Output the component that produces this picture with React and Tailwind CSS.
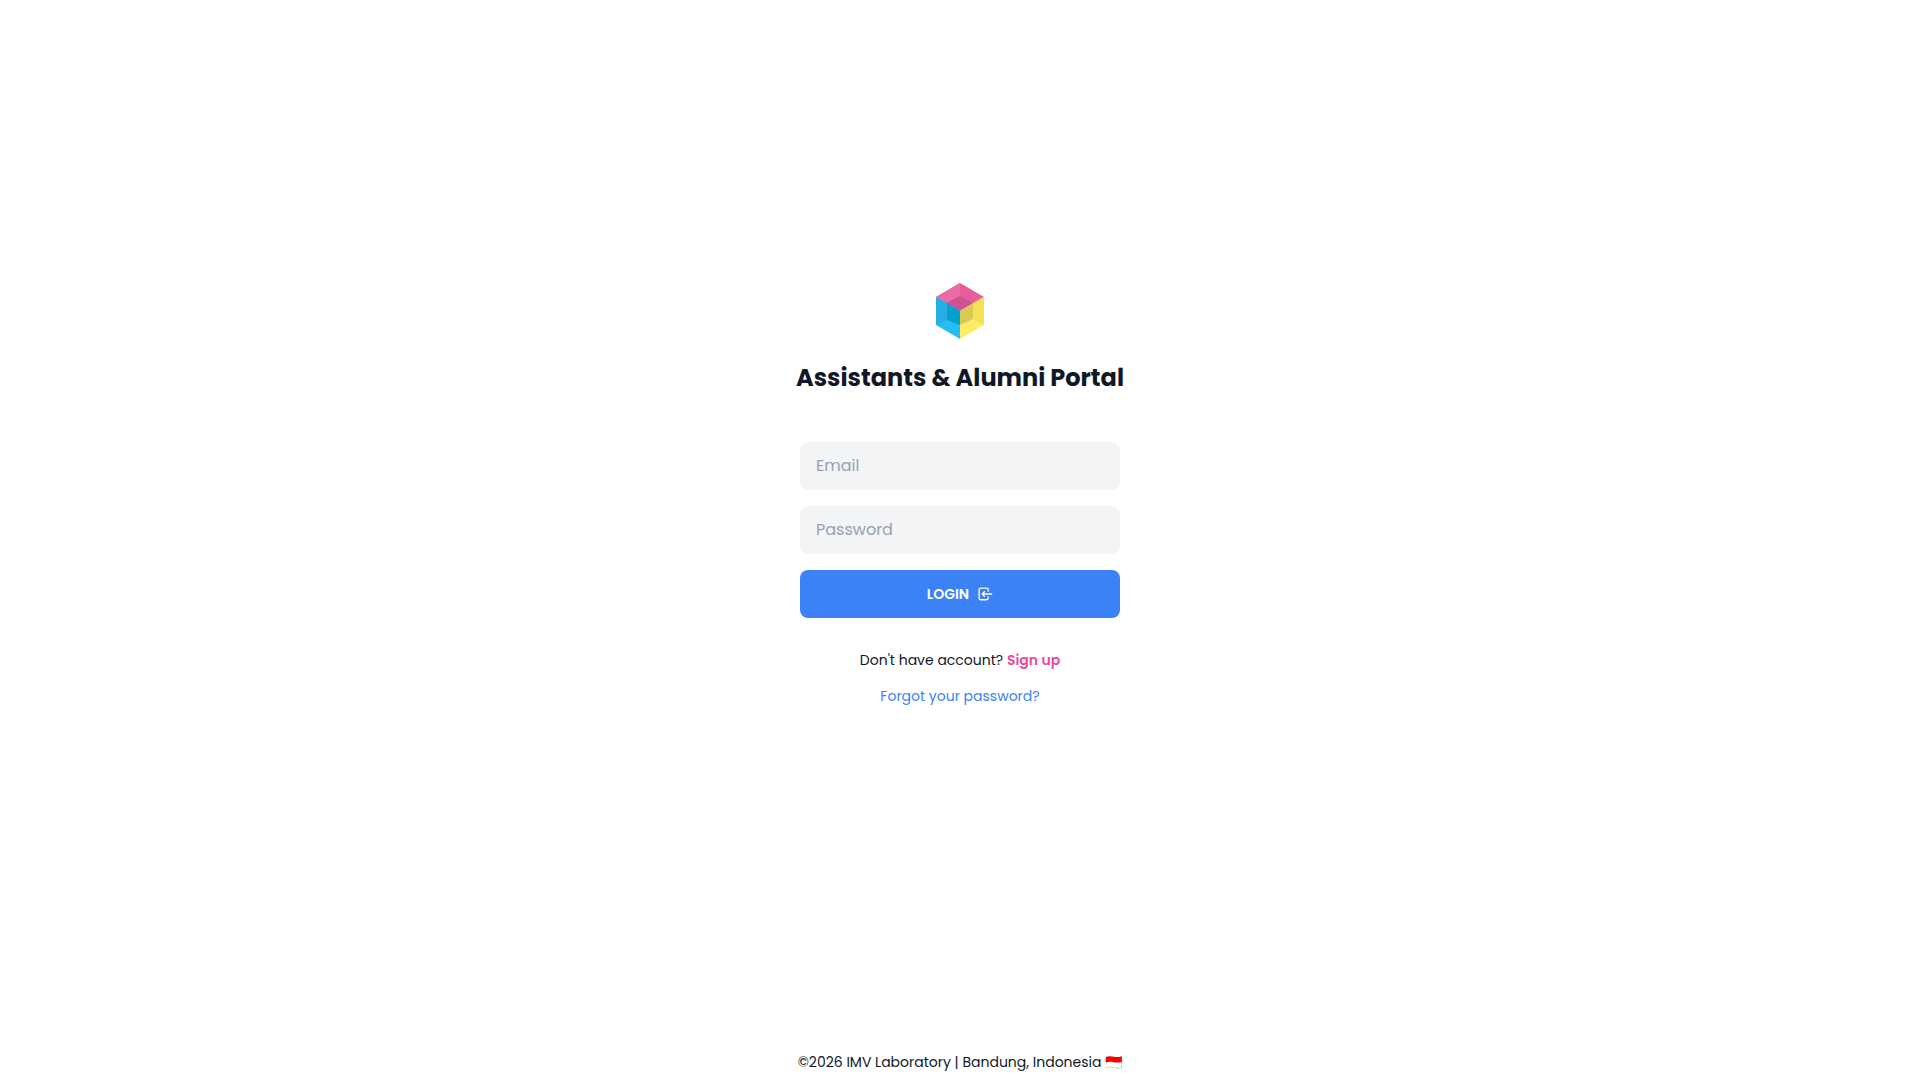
import React, { useState } from 'react';

const Logo = () => (
    <svg viewBox="0 0 48 56" className="w-12 h-14" role="img" aria-label="IMV Laboratory">
        {/* top face */}
        <path d="M24 0 0 14 24 28 48 14Z" fill="#e85c9c" />
        <path d="M24 0 0 14 11 20 24 13Z" fill="#ea6ca6" />
        <path d="M24 13 11 20 24 28 37 20Z" fill="#cc5291" />
        {/* left face */}
        <path d="M0 14 24 28V56L0 42Z" fill="#28bdf0" />
        <path d="M0 14 11 20V37L0 42Z" fill="#27afe4" />
        <path d="M11 20 24 28V42L11 37Z" fill="#05a0cf" />
        {/* right face */}
        <path d="M48 14 24 28V56L48 42Z" fill="#fbed65" />
        <path d="M48 14 37 20V36L48 42Z" fill="#f5e155" />
        <path d="M37 20 24 28V42L37 36Z" fill="#d8ca55" />
    </svg>
);

const LoginIcon = () => (
    <svg
        viewBox="0 0 16 16"
        className="w-4 h-4"
        fill="none"
        stroke="currentColor"
        strokeWidth="1.4"
        strokeLinecap="round"
        strokeLinejoin="round"
        aria-hidden="true"
    >
        <path d="M11.2 5V3.8a1.7 1.7 0 0 0-1.7-1.7H3.8a1.7 1.7 0 0 0-1.7 1.7v8.2a1.7 1.7 0 0 0 1.7 1.7h5.7a1.7 1.7 0 0 0 1.7-1.7V11" />
        <path d="M14.7 8H5.2M7.5 5.7 5.2 8l2.3 2.3" />
    </svg>
);

const inputClass =
    'w-full h-12 px-4 pb-0.5 rounded-lg bg-gray-100 text-base text-gray-900 placeholder:text-gray-400 focus:outline-none focus:ring-2 focus:ring-blue-500';

export default function App() {
    const [email, setEmail] = useState('');
    const [password, setPassword] = useState('');

    const handleSubmit = (e) => {
        e.preventDefault();
    };

    return (
        <div className="min-h-screen flex flex-col bg-white text-sm text-gray-900 antialiased font-[Poppins,Inter,sans-serif]">
            <main className="flex-1 flex flex-col items-center justify-center pb-[55px]">
                <Logo />
                <h1 className="mt-[23px] text-2xl font-bold text-center">Assistants &amp; Alumni Portal</h1>

                <form onSubmit={handleSubmit} className="mt-12 w-full max-w-80 flex flex-col gap-4">
                    <input
                        type="email"
                        aria-label="Email"
                        placeholder="Email"
                        value={email}
                        onChange={(e) => setEmail(e.target.value)}
                        className={inputClass}
                    />
                    <input
                        type="password"
                        aria-label="Password"
                        placeholder="Password"
                        value={password}
                        onChange={(e) => setPassword(e.target.value)}
                        className={inputClass}
                    />
                    <button
                        type="submit"
                        className="h-12 rounded-lg bg-[#3b82f6] hover:bg-blue-600 text-white font-semibold flex items-center justify-center gap-2 transition-colors"
                    >
                        LOGIN
                        <LoginIcon />
                    </button>
                </form>

                <p className="mt-8">
                    Don't have account?{' '}
                    <a href="#signup" className="font-semibold text-[#ec4899] hover:underline">Sign up</a>
                </p>
                <a href="#forgot" className="mt-4 text-[#3b82f6] hover:underline">Forgot your password?</a>
            </main>

            <footer className="p-2 text-center">©2026 IMV Laboratory | Bandung, Indonesia 🇮🇩</footer>
        </div>
    );
}
